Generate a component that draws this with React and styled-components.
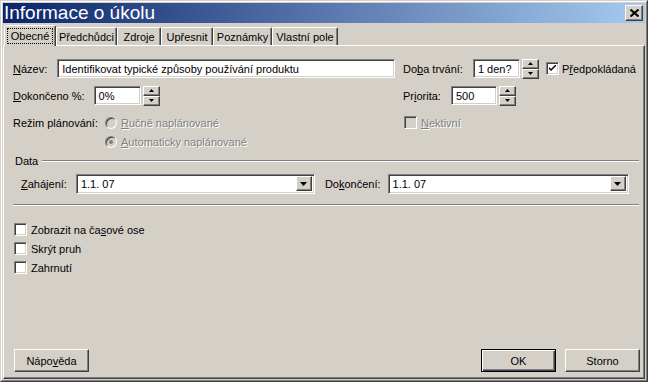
import React from 'react';
import styled, { createGlobalStyle, css } from 'styled-components';

const Global = createGlobalStyle`
  html, body { margin: 0; padding: 0; background: #d4d0c8; }
  body {
    font-family: "Liberation Sans", Arial, sans-serif;
    font-size: 11px;
    color: #000;
    -webkit-font-smoothing: none;
  }
  * { box-sizing: border-box; }
`;

const raised = css`
  background: #d4d0c8;
  border: 1px solid;
  border-color: #fff #404040 #404040 #fff;
  box-shadow: inset -1px -1px 0 #808080;
`;

const sunken = css`
  border: 1px solid;
  border-color: #808080 #fff #fff #808080;
  box-shadow: inset 1px 1px 0 #404040, inset -1px -1px 0 #d4d0c8;
`;

const Window = styled.div`
  width: 648px;
  height: 382px;
  background: #d4d0c8;
  border: 1px solid;
  border-color: #d4d0c8 #404040 #404040 #d4d0c8;
  display: flex;
  flex-direction: column;
`;

const WindowInner = styled.div`
  flex: 1;
  min-height: 0;
  display: flex;
  flex-direction: column;
  border: 1px solid;
  border-color: #fff #808080 #808080 #fff;
  padding: 1px;
`;

const TitleBar = styled.div`
  height: 20px;
  flex: none;
  display: flex;
  align-items: center;
  justify-content: space-between;
  padding: 0 2px 0 1px;
  background: linear-gradient(to right, #0a246a, #a6caf0);
`;

const TitleText = styled.span`
  color: #fff;
  font-size: 19px;
  line-height: 20px;
  white-space: nowrap;
`;

const CloseButton = styled.div`
  ${raised};
  width: 18px;
  height: 16px;
  display: flex;
  align-items: center;
  justify-content: center;
  padding-bottom: 1px;
`;

const TabStrip = styled.div`
  height: 22px;
  flex: none;
  display: flex;
  align-items: flex-end;
  padding-left: 1px;
  position: relative;
  z-index: 1;
`;

const Tab = styled.div`
  width: ${p => p.$w}px;
  height: ${p => (p.$active ? 21 : 18)}px;
  margin-bottom: ${p => (p.$active ? -1 : 0)}px;
  background: #d4d0c8;
  border-top: 1px solid #fff;
  border-left: 1px solid #fff;
  border-right: 1px solid #404040;
  box-shadow: inset -1px 0 0 #808080;
  border-radius: 2px 2px 0 0;
  display: flex;
  align-items: ${p => (p.$active ? 'flex-start' : 'center')};
  justify-content: center;
  padding-top: ${p => (p.$active ? 2 : 0)}px;
  white-space: nowrap;
`;

const Focus = styled.span`
  border: 1px dotted #000;
  padding: 0 3px;
  line-height: 14px;
`;

const Panel = styled.div`
  flex: 1;
  min-height: 0;
  display: flex;
  flex-direction: column;
  border-top: 1px solid #fff;
  border-left: 1px solid #fff;
  border-right: 1px solid #404040;
  border-bottom: 1px solid #404040;
  box-shadow: inset -1px -1px 0 #808080;
  padding: 13px 4px 6px 9px;
`;

const Row = styled.div`
  display: flex;
  align-items: center;
  height: ${p => p.$h || 19}px;
  margin-top: ${p => p.$mt || 0}px;
  padding-left: ${p => p.$pl || 0}px;
`;

const Cell = styled.div`
  display: flex;
  align-items: center;
  width: ${p => (p.$w ? `${p.$w}px` : 'auto')};
  flex: none;
`;

const Label = styled.span`
  white-space: nowrap;
  margin-left: ${p => p.$ml || 0}px;
  margin-right: ${p => p.$mr ?? 10}px;
  ${p =>
    p.$disabled &&
    css`
      color: #808080;
      text-shadow: 1px 1px 0 #fff;
    `}
`;

const U = styled.span`
  text-decoration: underline;
`;

const Field = styled.div`
  ${sunken};
  background: #fff;
  width: ${p => p.$w}px;
  height: ${p => p.$h || 19}px;
  display: flex;
  align-items: center;
  padding-left: 4px;
  padding-right: 2px;
  white-space: nowrap;
  overflow: hidden;
`;

const FieldText = styled.span`
  flex: 1;
`;

const Spinner = styled.div`
  width: 17px;
  height: 20px;
  margin-left: 2px;
  display: flex;
  flex-direction: column;
`;

const SpinButton = styled.div`
  ${raised};
  flex: 1;
  display: flex;
  align-items: center;
  justify-content: center;
`;

const DropButton = styled.div`
  ${raised};
  width: 16px;
  height: 15px;
  display: flex;
  align-items: center;
  justify-content: center;
`;

const Box = styled.div`
  ${sunken};
  width: 13px;
  height: 13px;
  flex: none;
  background: ${p => (p.$disabled ? '#d4d0c8' : '#fff')};
  margin-left: ${p => p.$ml || 0}px;
  margin-right: ${p => p.$mr ?? 4}px;
  display: flex;
  align-items: center;
  justify-content: center;
`;

const Radio = styled.div`
  width: 12px;
  height: 12px;
  flex: none;
  border-radius: 50%;
  background: #d4d0c8;
  border: 1px solid;
  border-color: #808080 #fff #fff #808080;
  box-shadow: inset 1px 1px 0 #404040;
  margin-right: 4px;
  display: flex;
  align-items: center;
  justify-content: center;
`;

const Dot = styled.div`
  width: 4px;
  height: 4px;
  border-radius: 50%;
  background: #808080;
`;

const RadioGrid = styled.div`
  display: grid;
  grid-template-columns: 92px auto 1fr;
  grid-auto-rows: 19px;
  align-items: center;
  margin-top: 8px;
`;

const GroupHeader = styled.div`
  display: flex;
  align-items: center;
  height: 13px;
  margin-top: 3px;
  padding-left: 2px;
  margin-right: 1px;
`;

const Etched = styled.div`
  flex: 1;
  height: 2px;
  border-top: 1px solid #808080;
  border-bottom: 1px solid #fff;
  margin-right: ${p => p.$mr || 0}px;
`;

const CheckList = styled.div`
  display: flex;
  flex-direction: column;
  margin-top: 14px;
`;

const Spacer = styled.div`
  flex: 1;
`;

const ButtonRow = styled.div`
  display: flex;
  align-items: center;
  padding-left: 1px;
  gap: 9px;
`;

const Button = styled.div`
  width: 75px;
  height: 23px;
  display: flex;
  align-items: center;
  justify-content: center;
  background: #d4d0c8;
  ${p =>
    p.$default
      ? css`
          border: 1px solid #000;
          box-shadow: inset 1px 1px 0 #fff, inset -1px -1px 0 #404040, inset -2px -2px 0 #808080;
        `
      : raised}
  margin-left: ${p => (p.$push ? 'auto' : '0')};
`;

const UpArrow = () => (
  <svg width="5" height="3" viewBox="0 0 5 3"><path d="M2.5 0 L5 3 L0 3 Z" fill="#000" /></svg>
);
const DownArrow = ({ w = 5, h = 3 }) => (
  <svg width={w} height={h} viewBox={`0 0 ${w} ${h}`}><path d={`M0 0 L${w} 0 L${w / 2} ${h} Z`} fill="#000" /></svg>
);
const Check = () => (
  <svg width="7" height="7" viewBox="0 0 7 7">
    <path d="M0 2 L0 4 L2 6 L7 1 L7 -1 L2 4 Z" fill="#000" />
  </svg>
);
const CloseX = () => (
  <svg width="9" height="8" viewBox="0 0 9 8">
    <path d="M0.5 0.5 L8.5 7.5 M8.5 0.5 L0.5 7.5" stroke="#000" strokeWidth="2" />
  </svg>
);

const Spin = () => (
  <Spinner>
    <SpinButton><UpArrow /></SpinButton>
    <SpinButton><DownArrow /></SpinButton>
  </Spinner>
);

const Combo = ({ w, value }) => (
  <Field $w={w} $h={20}>
    <FieldText>{value}</FieldText>
    <DropButton><DownArrow w={7} h={4} /></DropButton>
  </Field>
);

const tabs = [
  ['Obecné', 52],
  ['Předchůdci', 61],
  ['Zdroje', 44],
  ['Upřesnit', 52],
  ['Poznámky', 59],
  ['Vlastní pole', 66],
];

export default function App() {
  return (
    <>
      <Global />
      <Window>
        <WindowInner>
          <TitleBar>
            <TitleText>Informace o úkolu</TitleText>
            <CloseButton><CloseX /></CloseButton>
          </TitleBar>
          <TabStrip>
            {tabs.map(([t, w], i) => (
              <Tab key={t} $w={w} $active={i === 0}>
                {i === 0 ? <Focus>{t}</Focus> : t}
              </Tab>
            ))}
          </TabStrip>
          <Panel>
            <Row>
              <Cell $w={390}>
                <Label><U>N</U>ázev:</Label>
                <Field $w={338}>Identifikovat typické způsoby používání produktu</Field>
              </Cell>
              <Cell>
                <Label>Do<U>b</U>a trvání:</Label>
                <Field $w={47}>1 den?</Field>
                <Spin />
                <Box $ml={7} $mr={3}><Check /></Box>
                <Label $mr={0}>P<U>ř</U>edpokládaná</Label>
              </Cell>
            </Row>
            <Row $mt={8}>
              <Cell $w={390}>
                <Label $mr={9}><U>D</U>okončeno %:</Label>
                <Field $w={47}>0%</Field>
                <Spin />
              </Cell>
              <Cell>
                <Label $mr={10}>Pr<U>i</U>orita:</Label>
                <Field $w={46}>500</Field>
                <Spin />
              </Cell>
            </Row>
            <RadioGrid>
              <Label $mr={0}>Režim plánování:</Label>
              <Cell $w={298}>
                <Radio />
                <Label $disabled><U>R</U>učně naplánované</Label>
              </Cell>
              <Cell>
                <Box $disabled $ml={1} $mr={4} />
                <Label $disabled><U>N</U>ektivní</Label>
              </Cell>
              <span />
              <Cell>
                <Radio><Dot /></Radio>
                <Label $disabled><U>A</U>utomaticky naplánované</Label>
              </Cell>
            </RadioGrid>
            <GroupHeader>
              <Label $mr={4}>Data</Label>
              <Etched />
            </GroupHeader>
            <Row $mt={7} $pl={8}>
              <Label $mr={9}><U>Z</U>ahájení:</Label>
              <Combo w={239} value="1.1. 07" />
              <Label $ml={10} $mr={7}>Do<U>k</U>ončení:</Label>
              <Combo w={241} value="1.1. 07" />
            </Row>
            <Row $h={2} $mt={11}>
              <Etched $mr={1} />
            </Row>
            <CheckList>
              <Row>
                <Box $ml={1} $mr={4} />
                <Label>Zobrazit na ča<U>s</U>ové ose</Label>
              </Row>
              <Row>
                <Box $ml={1} $mr={4} />
                <Label>Skrýt pruh</Label>
              </Row>
              <Row>
                <Box $ml={1} $mr={4} />
                <Label>Zahrnutí</Label>
              </Row>
            </CheckList>
            <Spacer />
            <ButtonRow>
              <Button>Nápo<U>v</U>ěda</Button>
              <Button $default $push>OK</Button>
              <Button>Storno</Button>
            </ButtonRow>
          </Panel>
        </WindowInner>
      </Window>
    </>
  );
}
